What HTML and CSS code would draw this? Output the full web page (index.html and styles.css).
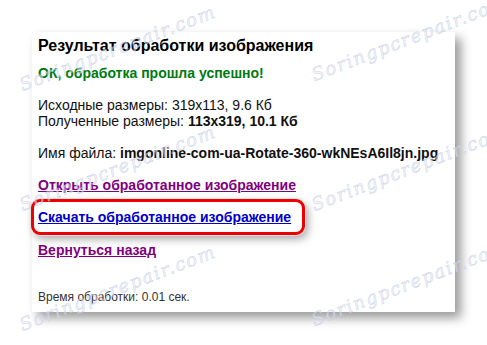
FILE: index.html
```html
<!DOCTYPE html>
<html lang="ru">
<head>
    <meta charset="UTF-8">
    <meta name="viewport" content="width=device-width, initial-scale=1.0">
    <title>Результат обработки изображения</title>
    <link rel="stylesheet" href="styles.css">
</head>
<body>
    <div class="pagina">
        <div class="resultado">
            <h1 class="titulo">Результат обработки изображения</h1>
            <p class="ok">ОК, обработка прошла успешно!</p>
            <p>Исходные размеры: 319x113, 9.6 Кб<br>Полученные размеры: <b>113x319, 10.1 Кб</b></p>
            <p>Имя файла: <b>imgonline-com-ua-Rotate-360-wkNEsA6Il8jn.jpg</b></p>
            <p><a class="visitado" href="#">Открыть обработанное изображение</a></p>
            <p class="marcado"><a class="novo" href="#">Скачать обработанное изображение</a></p>
            <p><a class="visitado" href="#">Вернуться назад</a></p>
            <p class="tempo">Время обработки: 0.01 сек.</p>
        </div>
    </div>

    <!-- marca d'agua por cima do conteudo -->
    <div class="marca m1">Soringpcrepair.com</div>
    <div class="marca m2">Soringpcrepair.com</div>
    <div class="marca m3">Soringpcrepair.com</div>
    <div class="marca m4">Soringpcrepair.com</div>
    <div class="marca m5">Soringpcrepair.com</div>
    <div class="marca m6">Soringpcrepair.com</div>
</body>
</html>
```

FILE: styles.css
```css
body,html{
    margin: 0;
    height: 100%;
    background-color: #fff;
    font-family: "Liberation Sans", Arial, sans-serif;
    overflow: hidden;
}
.pagina{
    padding: 32px 0 0 32px;
}
.resultado{
    width: 417px;
    height: 275px;
    padding: 5px 0 0 6px;
    background-color: #fff;
    box-shadow: 6px 6px 10px rgba(0, 0, 0, 0.4);
    font-size: 14px;
    line-height: 16px;
    color: #111;
}
.titulo{
    margin: 0 0 10px 0;
    font-size: 16px;
    line-height: 18px;
    color: #000;
}
p{
    margin: 0 0 16px 0;
}
.ok{
    font-weight: bold;
    color: #007a10;
}
a{
    font-weight: bold;
}
.visitado{
    color: #800080;
}
.novo{
    color: #0000c8;
}
.marcado{
    width: fit-content;
    margin: -10px 0 7px -7px;
    padding: 7px 11px 7px 4px;
    border: 3px solid #ee0000;
    border-radius: 9px;
    box-shadow: 0 0 0 1px #e4e4e4, 3px 4px 8px rgba(0, 0, 0, 0.35);
}
.tempo{
    margin-top: 31px;
    font-size: 12px;
    color: #333;
}
.marca{
    position: absolute;
    font-family: "DejaVu Serif", serif;
    font-style: italic;
    font-size: 18px;
    color: rgba(232, 236, 246, 0.5);
    -webkit-text-stroke: 0.5px rgba(185, 195, 225, 0.7);
    transform: rotate(-21deg);
    transform-origin: left bottom;
    white-space: nowrap;
    letter-spacing: 1.6px;
}
.m1{ left: 24px; top: 74px; }
.m2{ left: 316px; top: 64px; }
.m3{ left: 24px; top: 194px; }
.m4{ left: 316px; top: 194px; }
.m5{ left: 24px; top: 314px; }
.m6{ left: 316px; top: 309px; }
```
